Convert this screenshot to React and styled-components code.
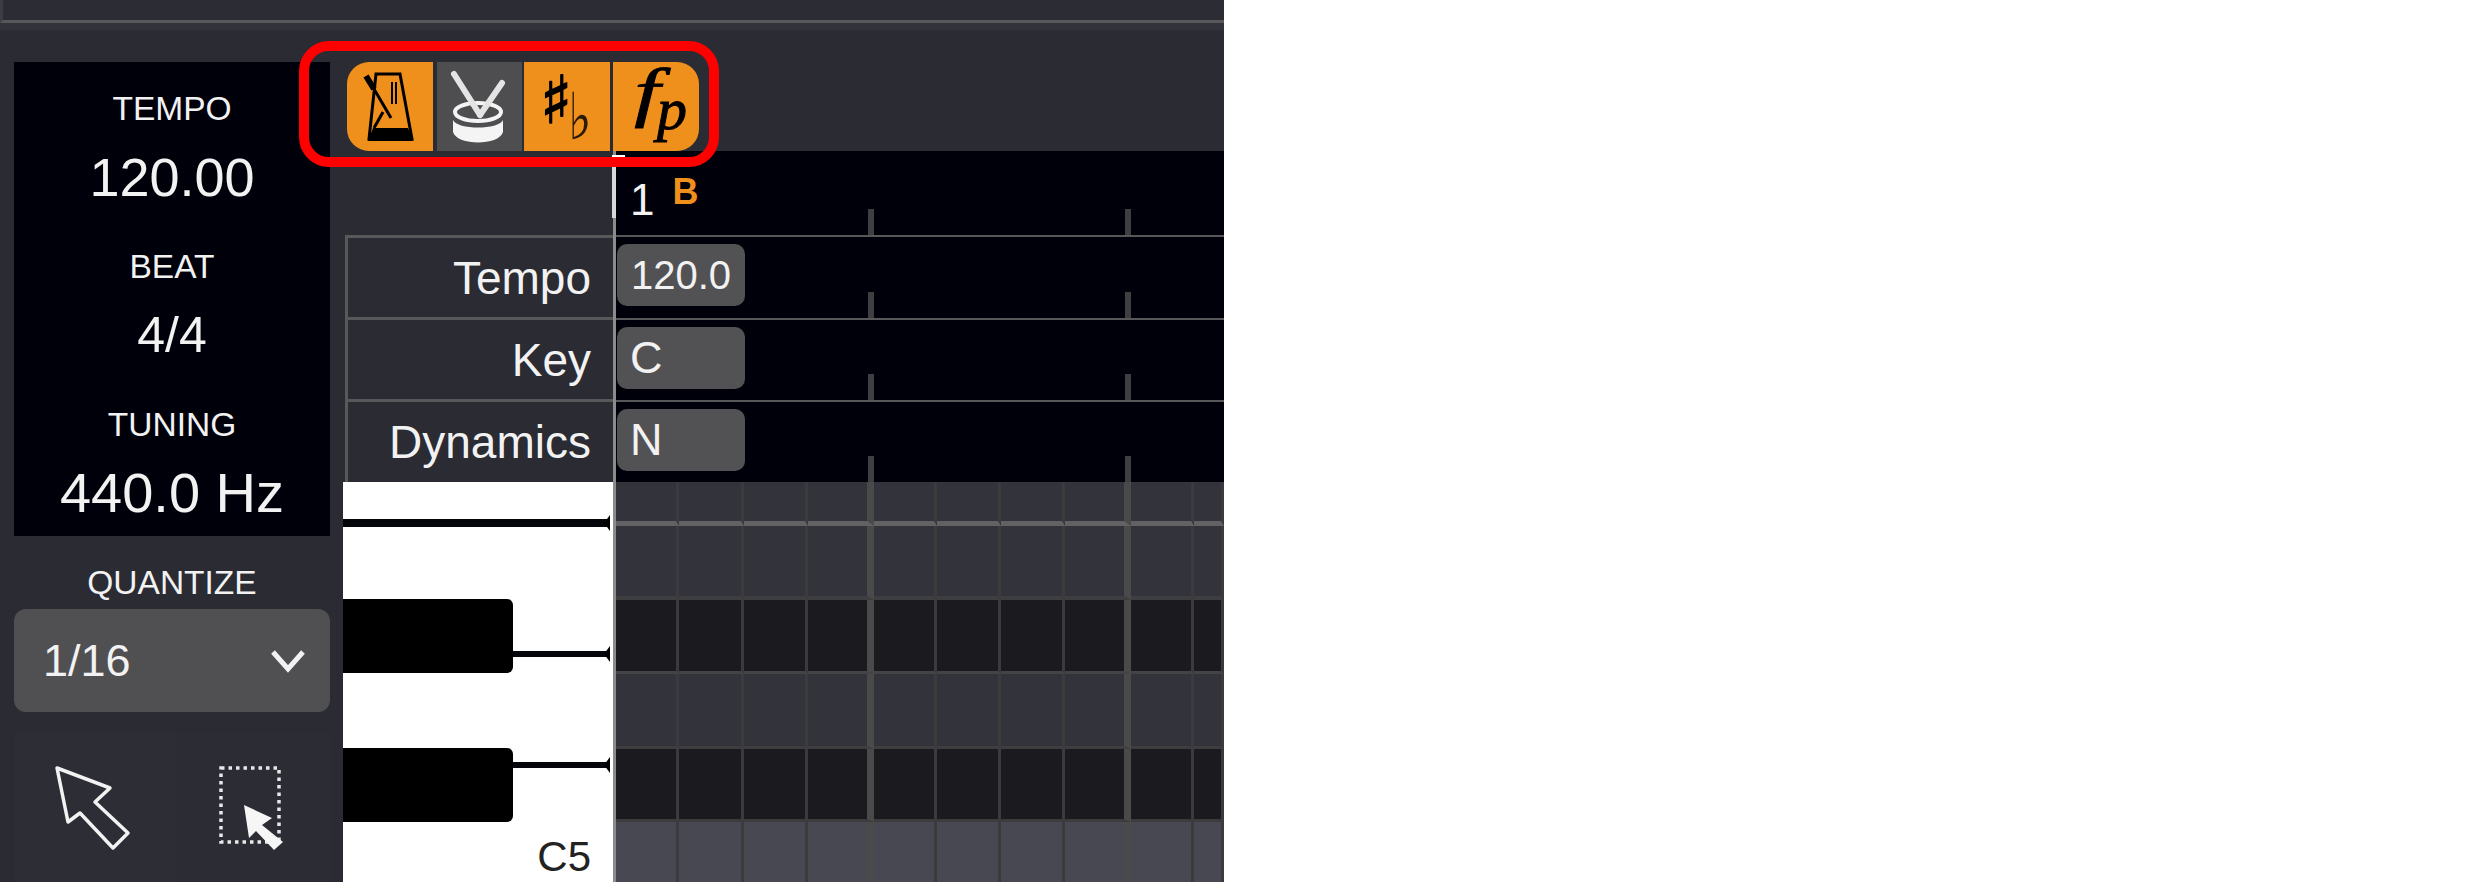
import React from "react";
import styled, { createGlobalStyle } from "styled-components";

const GlobalStyle = createGlobalStyle`
  html, body {
    margin: 0;
    padding: 0;
    background: #fff;
  }
  * {
    box-sizing: border-box;
  }
`;

const BG = "#2a2b33";
const LINE = "#58585a";
const ORANGE = "#ef8f1c";
const CHIP = "#525254";

const CELLS = [
  { w: 63 },
  { w: 65 },
  { w: 64 },
  { w: 66, major: true },
  { w: 63 },
  { w: 64 },
  { w: 64 },
  { w: 66, major: true },
  { w: 63 },
  { w: 30 },
];

const GRID_ROWS = [
  { h: 44, bg: "#32333b", line: "#626264", lineW: 5 },
  { h: 74, bg: "#32333b", line: "#3e3e40", lineW: 4 },
  { h: 74, bg: "#1a1a1f", line: "#444446", lineW: 3 },
  { h: 75, bg: "#32333b", line: "#3e3e40", lineW: 3 },
  { h: 73, bg: "#1a1a1f", line: "#3c3c3e", lineW: 3 },
  { h: 62, bg: "#484852", line: "transparent", lineW: 0 },
];

const App_ = styled.div`
  position: relative;
  width: 1224px;
  height: 882px;
  overflow: hidden;
  background: ${BG};
  font-family: "Liberation Sans", Arial, sans-serif;
  color: #f2f2f2;
  display: flex;
  flex-direction: column;
`;

const TopBar = styled.div`
  height: 23px;
  flex: none;
  background: #2b2c34;
  border-left: 3px solid #3d3d42;
  border-bottom: 3px solid ${LINE};
`;

const TopShade = styled.div`
  height: 7px;
  flex: none;
  background: #33343b;
`;

const Main = styled.div`
  flex: 1;
  display: flex;
  min-height: 0;
`;

const Sidebar = styled.aside`
  width: 343px;
  flex: none;
  padding: 32px 13px 0 14px;
  display: flex;
  flex-direction: column;
`;

const InfoPanel = styled.div`
  height: 475px;
  background: #00000a;
  padding-top: 25px;
  display: flex;
  flex-direction: column;
  gap: 34px;
  align-items: center;
`;

const Stat = styled.div`
  display: flex;
  flex-direction: column;
  align-items: center;
  gap: 12px;
`;

const StatLabel = styled.div`
  font-size: 33.5px;
  line-height: 44px;
`;

const StatValue = styled.div`
  font-size: ${(p) => p.$size || 54}px;
  line-height: 68px;
`;

const QuantizeLabel = styled.div`
  font-size: 33.5px;
  line-height: 44px;
  text-align: center;
  margin-top: 25px;
`;

const Select = styled.div`
  height: 103px;
  margin-top: 4px;
  background: #505052;
  border-radius: 12px;
  display: flex;
  align-items: center;
  justify-content: space-between;
  padding: 0 24px 0 29px;
  font-size: 45px;
`;

const ToolRow = styled.div`
  margin-top: 21px;
  display: grid;
  grid-template-columns: 161px 155px;
  height: 149px;
`;

const ToolButton = styled.div`
  background: ${(p) => (p.$alt ? "#2b2c34" : "#2c2d35")};
  svg {
    display: block;
  }
`;

const Content = styled.div`
  flex: 1;
  display: flex;
  flex-direction: column;
  min-width: 0;
`;

const ToolbarRow = styled.div`
  height: 121px;
  flex: none;
  padding-top: 32px;
  display: flex;
`;

const Toolbar = styled.div`
  display: flex;
  padding-left: 4px;
  height: 89px;
`;

const ToolbarButton = styled.div`
  width: ${(p) => p.$w}px;
  height: 89px;
  margin-right: ${(p) => p.$gap || 0}px;
  background: ${(p) => (p.$off ? "#4e4e50" : ORANGE)};
  border-radius: ${(p) => (p.$first ? "22px 0 0 22px" : p.$last ? "0 22px 22px 0" : "0")};
  position: relative;
  color: #000;
  svg {
    display: block;
  }
`;

const Sharp = styled.span`
  position: absolute;
  left: 16px;
  top: 4px;
  width: 26px;
  font-family: "DejaVu Sans", sans-serif;
  font-weight: bold;
  font-size: 66px;
  line-height: 70px;
  -webkit-text-stroke: 1.5px #000;
`;

const Flat = styled.span`
  position: absolute;
  left: 44px;
  top: 33px;
  font-family: "DejaVu Sans", sans-serif;
  font-size: 50px;
  line-height: 44px;
  color: #2a1a05;
  transform: scaleY(1.3);
`;

const DynF = styled.span`
  position: absolute;
  left: 25px;
  top: 0;
  font-family: "Liberation Serif", serif;
  font-style: italic;
  font-size: 66px;
  line-height: 60px;
  -webkit-text-stroke: 0.8px #000;
  transform: scaleX(1.4);
`;

const DynP = styled.span`
  position: absolute;
  left: 44px;
  top: 22px;
  font-family: "Liberation Serif", serif;
  font-style: italic;
  font-size: 60px;
  line-height: 50px;
  -webkit-text-stroke: 1px #000;
`;

const Tracks = styled.div`
  flex: 1;
  display: flex;
  min-height: 0;
`;

const LeftColumn = styled.div`
  width: 273px;
  flex: none;
  border-right: 3px solid #8b8b8c;
  display: flex;
  flex-direction: column;
`;

const LabelSpacer = styled.div`
  height: 84px;
  flex: none;
`;

const LaneLabel = styled.div`
  height: ${(p) => p.$h}px;
  flex: none;
  margin-left: 2px;
  border-top: 3px solid ${LINE};
  border-left: 3px solid ${LINE};
  display: flex;
  align-items: center;
  justify-content: flex-end;
  padding-right: 22px;
  font-size: 46px;
`;

const Piano = styled.div`
  position: relative;
  flex: 1;
  background: #fff;
  display: flex;
  justify-content: flex-end;
  align-items: flex-end;
  padding: 0 22px 3px 0;
`;

const KeyNote = styled.span`
  font-size: 42px;
  line-height: 44px;
  color: #222;
`;

const BlackKey = styled.div`
  position: absolute;
  left: 0;
  top: ${(p) => p.$top}px;
  width: 170px;
  height: 74px;
  background: #000;
  border-radius: 0 6px 6px 0;
`;

const KeyLine = styled.div`
  position: absolute;
  left: 0;
  right: 3px;
  top: ${(p) => p.$top}px;
  height: ${(p) => p.$h}px;
  background: #05050c;
  &::after {
    content: "";
    position: absolute;
    right: 0;
    top: 50%;
    margin-top: -8px;
    width: 6px;
    height: 16px;
    background: #000;
    clip-path: polygon(100% 0, 100% 100%, 0 50%);
  }
`;

const RightColumn = styled.div`
  flex: 1;
  min-width: 0;
  display: flex;
  flex-direction: column;
`;

const tickBg = `
  background-image: linear-gradient(#3f3f41, #3f3f41), linear-gradient(#3f3f41, #3f3f41);
  background-repeat: no-repeat;
  background-size: 6px 26px;
  background-position: 252px bottom, 509px bottom;
`;

const RulerRow = styled.div`
  height: 86px;
  flex: none;
  background-color: #00000a;
  ${tickBg}
  border-bottom: 2px solid ${LINE};
  display: flex;
  align-items: flex-start;
  padding: 27px 0 0 14px;
`;

const BarNumber = styled.span`
  font-size: 44px;
  line-height: 44px;
`;

const MarkerB = styled.span`
  font-size: 36px;
  font-weight: bold;
  line-height: 28px;
  color: ${ORANGE};
  margin: 0 0 0 18px;
`;

const LaneRow = styled.div`
  height: ${(p) => p.$h}px;
  flex: none;
  background-color: #00000a;
  ${tickBg}
  border-bottom: ${(p) => (p.$last ? "none" : `2px solid ${LINE}`)};
  padding: 7px 0 0 1px;
`;

const Chip = styled.div`
  width: 128px;
  height: 62px;
  background: ${CHIP};
  border-radius: 10px;
  font-size: ${(p) => p.$size}px;
  line-height: 62px;
  padding-left: ${(p) => p.$pad}px;
`;

const GridArea = styled.div`
  flex: 1;
  display: flex;
  flex-direction: column;
  min-height: 0;
`;

const GridRow = styled.div`
  display: flex;
  flex: none;
  height: ${(p) => p.$h}px;
  background: ${(p) => p.$bg};
`;

const GridCell = styled.div`
  flex: none;
  width: ${(p) => p.$w}px;
  height: 100%;
  border-right: ${(p) => (p.$major ? "7px solid #4a4a4b" : "3px solid #3b3b3d")};
  border-bottom: ${(p) => p.$lineW}px solid ${(p) => p.$line};
`;

const Playhead = styled.div`
  position: absolute;
  left: 612px;
  top: 155px;
  width: 13px;
  height: 3px;
  background: #fff;
  &::after {
    content: "";
    position: absolute;
    left: 0;
    top: 3px;
    width: 4px;
    height: 60px;
    background: #d8d8d8;
  }
`;

const Highlight = styled.div`
  position: absolute;
  left: 299px;
  top: 41px;
  width: 420px;
  height: 126px;
  border: 10px solid #fe0000;
  border-radius: 30px;
  pointer-events: none;
`;

function MetronomeIcon() {
  return (
    <svg width="86" height="89" viewBox="0 0 86 89">
      <path d="M29 12 H53 L65 77 H22 Z" fill="none" stroke="#000" strokeWidth="3" />
      <path d="M21 79 L26 66 H61 L66 79 Z" fill="#000" />
      <path d="M27 66 L36 50" stroke="#000" strokeWidth="3" />
      <path d="M20 15 L44 56" stroke="#000" strokeWidth="3" />
      <path d="M19 14 L27 27" stroke="#000" strokeWidth="6" />
      <path d="M45 20 V42 M49 20 V42" stroke="#000" strokeWidth="2" />
    </svg>
  );
}

function DrumIcon() {
  return (
    <svg width="85" height="89" viewBox="0 0 85 89">
      <ellipse cx="41" cy="50" rx="23" ry="9" fill="none" stroke="#f4f4f4" strokeWidth="4" />
      <path d="M16 58 C20 68 62 68 66 58 V70 C62 84 20 84 16 70 Z" fill="#f4f4f4" />
      <path d="M17 12 L43 53" stroke="#e4e4e4" strokeWidth="6" strokeLinecap="round" />
      <path d="M65 21 L43 53" stroke="#e4e4e4" strokeWidth="6" strokeLinecap="round" />
    </svg>
  );
}

function Chevron() {
  return (
    <svg width="36" height="26" viewBox="0 0 36 26">
      <path d="M3 4 L18 21 L33 4" fill="none" stroke="#f2f2f2" strokeWidth="5" />
    </svg>
  );
}

function ArrowOutline() {
  return (
    <svg width="161" height="149" viewBox="0 0 161 149">
      <path
        d="M43 35 L96 55 L81 69 L114 100 L99 115 L66 80 L54 89 Z"
        fill="none"
        stroke="#f2f2f2"
        strokeWidth="3.5"
        strokeLinejoin="round"
      />
    </svg>
  );
}

function MarqueeArrow() {
  return (
    <svg width="155" height="149" viewBox="0 0 155 149">
      <rect
        x="46"
        y="35"
        width="58"
        height="74"
        fill="none"
        stroke="#e8e8e8"
        strokeWidth="3.5"
        strokeDasharray="3.5 4"
      />
      <path d="M69 72 L97 85 L87 92 L108 109 L99 117 L81 98 L74 105 Z" fill="#f6f6f6" />
    </svg>
  );
}

export default function App() {
  return (
    <App_>
      <GlobalStyle />
      <TopBar />
      <TopShade />
      <Main>
        <Sidebar>
          <InfoPanel>
            <Stat>
              <StatLabel>TEMPO</StatLabel>
              <StatValue>120.00</StatValue>
            </Stat>
            <Stat>
              <StatLabel>BEAT</StatLabel>
              <StatValue $size={50}>4/4</StatValue>
            </Stat>
            <Stat>
              <StatLabel>TUNING</StatLabel>
              <StatValue $size={56}>440.0 Hz</StatValue>
            </Stat>
          </InfoPanel>
          <QuantizeLabel>QUANTIZE</QuantizeLabel>
          <Select>
            1/16
            <Chevron />
          </Select>
          <ToolRow>
            <ToolButton>
              <ArrowOutline />
            </ToolButton>
            <ToolButton $alt>
              <MarqueeArrow />
            </ToolButton>
          </ToolRow>
        </Sidebar>
        <Content>
          <ToolbarRow>
            <Toolbar>
              <ToolbarButton $w={86} $gap={4} $first>
                <MetronomeIcon />
              </ToolbarButton>
              <ToolbarButton $w={85} $gap={2} $off>
                <DrumIcon />
              </ToolbarButton>
              <ToolbarButton $w={86} $gap={3}>
                <Sharp>♯</Sharp>
                <Flat>♭</Flat>
              </ToolbarButton>
              <ToolbarButton $w={86} $last>
                <DynF>f</DynF>
                <DynP>p</DynP>
              </ToolbarButton>
            </Toolbar>
          </ToolbarRow>
          <Tracks>
            <LeftColumn>
              <LabelSpacer />
              <LaneLabel $h={82}>Tempo</LaneLabel>
              <LaneLabel $h={82}>Key</LaneLabel>
              <LaneLabel $h={83}>Dynamics</LaneLabel>
              <Piano>
                <KeyLine $top={37} $h={8} />
                <KeyLine $top={169} $h={6} />
                <KeyLine $top={280} $h={6} />
                <BlackKey $top={117} />
                <BlackKey $top={266} />
                <KeyNote>C5</KeyNote>
              </Piano>
            </LeftColumn>
            <RightColumn>
              <RulerRow>
                <BarNumber>1</BarNumber>
                <MarkerB>B</MarkerB>
              </RulerRow>
              <LaneRow $h={83}>
                <Chip $size={40} $pad={14}>120.0</Chip>
              </LaneRow>
              <LaneRow $h={82}>
                <Chip $size={45} $pad={13}>C</Chip>
              </LaneRow>
              <LaneRow $h={80} $last>
                <Chip $size={45} $pad={13}>N</Chip>
              </LaneRow>
              <GridArea>
                {GRID_ROWS.map((row, i) => (
                  <GridRow key={i} $h={row.h} $bg={row.bg}>
                    {CELLS.map((cell, j) => (
                      <GridCell
                        key={j}
                        $w={cell.w}
                        $major={cell.major}
                        $line={row.line}
                        $lineW={row.lineW}
                      />
                    ))}
                  </GridRow>
                ))}
              </GridArea>
            </RightColumn>
          </Tracks>
        </Content>
      </Main>
      <Playhead />
      <Highlight />
    </App_>
  );
}
